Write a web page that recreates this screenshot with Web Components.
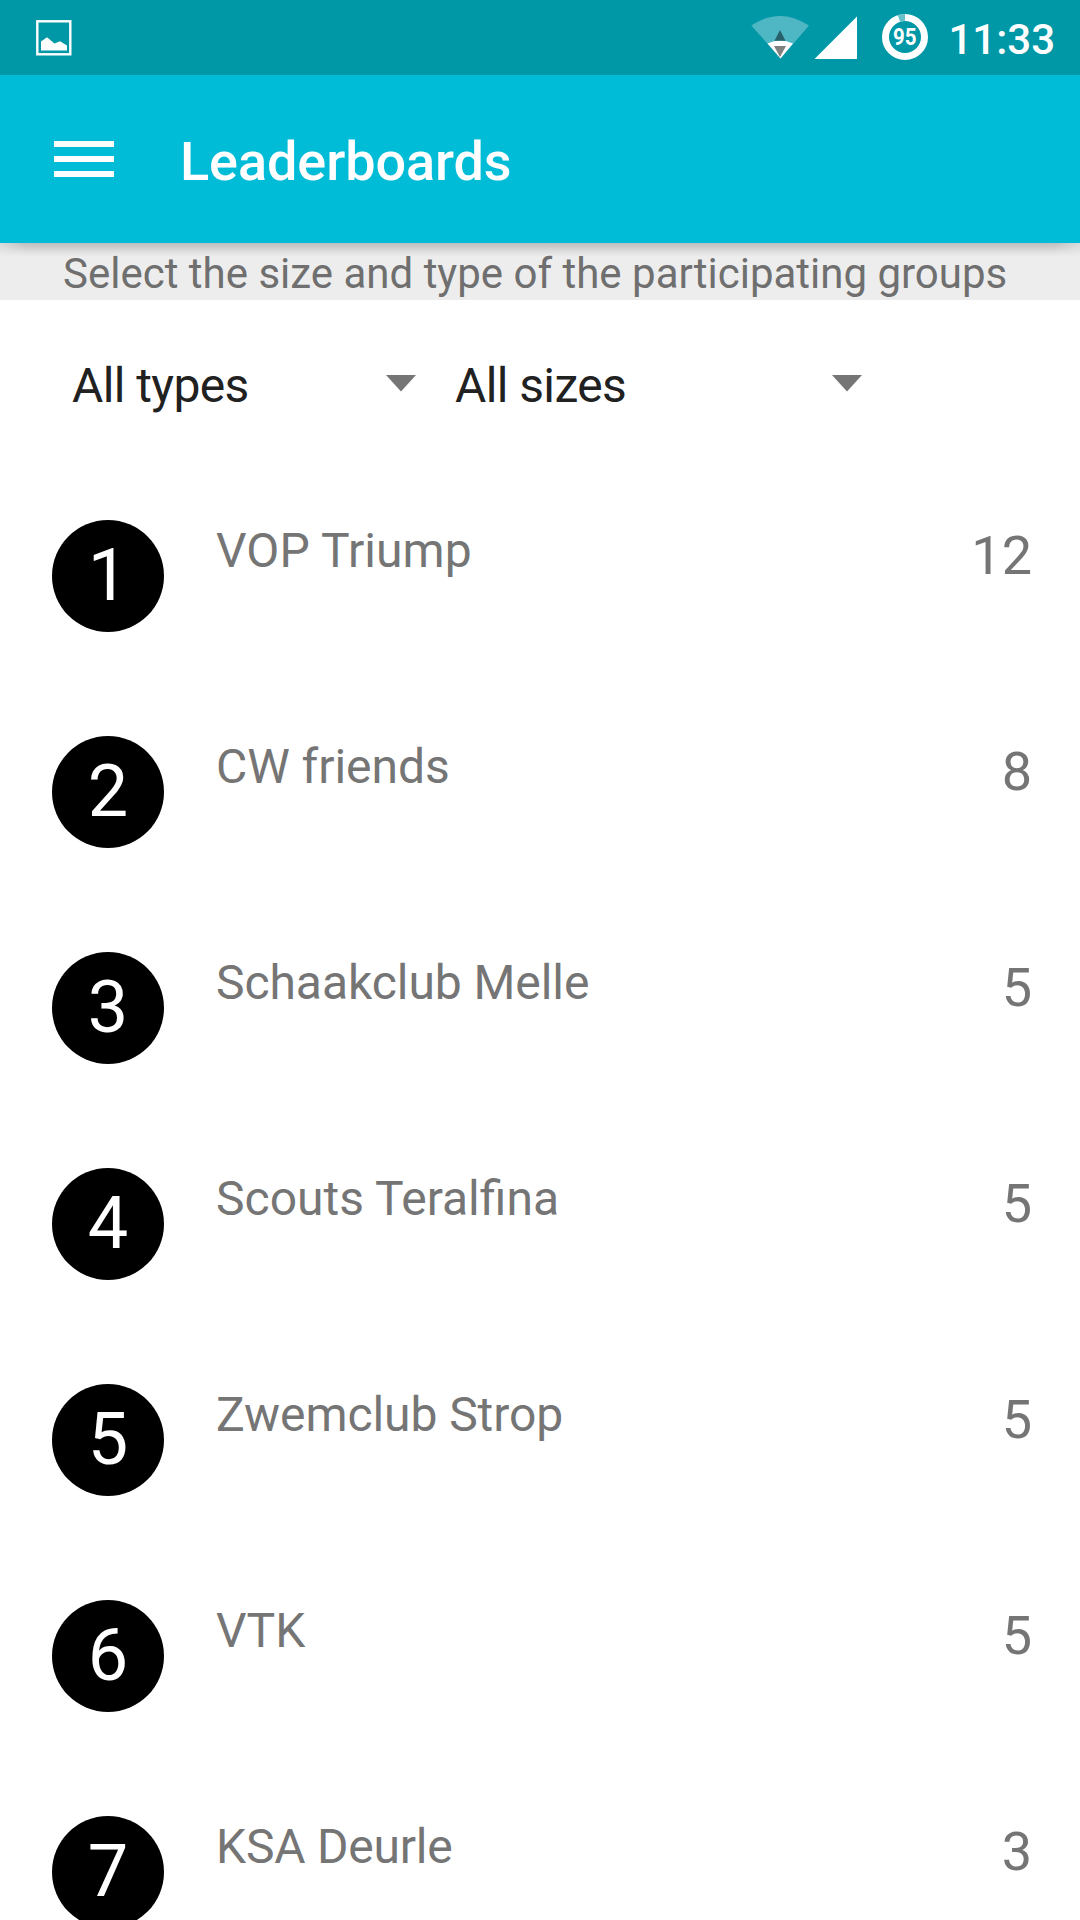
<!DOCTYPE html>
<html lang="en">
<head>
<meta charset="utf-8">
<title>Leaderboards</title>
<style>
html,body{margin:0;padding:0;width:1080px;height:1920px;overflow:hidden;background:#fff;font-family:Roboto,"Liberation Sans",sans-serif}
</style>
</head>
<body>
<leader-app></leader-app>
<script>
const define = (name, html) => customElements.define(name, class extends HTMLElement {
  constructor() {
    super();
    const t = document.createElement('template');
    t.innerHTML = html;
    this.attachShadow({mode: 'open'}).append(t.content.cloneNode(true));
  }
});

define('status-bar', `
<style>
:host{display:flex;height:75px;background:#0097a7;color:#fff;box-sizing:border-box;padding:0 25px 0 36px;justify-content:space-between}
svg{display:block}
.right{display:flex}
.time{font-size:42px;font-weight:500;line-height:79px;margin-left:19px}
</style>
<svg width="36" height="75" viewBox="0 0 36 75"><rect x="1.3" y="21.3" width="33" height="33" fill="none" stroke="#fff" stroke-width="2.4"/><path d="M5 50.5V41.5L11 37.2L18.5 43.5L24 41.2L31 45.5V50.5Z" fill="#fff"/></svg>
<div class="right">
<svg width="178" height="75" viewBox="751 0 178 75">
<path d="M751.3 25.5Q780 6.5 809 25.5L780.5 58.5Z" fill="#4fb6c3"/>
<path d="M767.5 43.5Q780 37.5 793 43.5L780.5 58.5Z" fill="#fff"/>
<path d="M774.5 40.7L780 30L785.5 40.7Z" fill="#26616b"/>
<path d="M774 46H786L780 57Z" fill="#808080"/>
<path d="M814.5 59L857 16.5V59Z" fill="#fff"/>
<circle cx="905" cy="37" r="19.5" fill="none" stroke="#fff" stroke-width="7"/>
<path d="M898.9 18.5A19.5 19.5 0 0 1 905 17.5" fill="none" stroke="#66c1ca" stroke-width="7"/>
<text x="904.7" y="45" text-anchor="middle" textLength="23.5" lengthAdjust="spacingAndGlyphs" font-size="23" font-weight="700" fill="#fff">95</text>
</svg>
<span class="time">11:33</span>
</div>`);

define('app-bar', `
<style>
:host{display:flex;align-items:center;height:168px;box-sizing:border-box;padding-left:54px;background:#00bcd7;color:#fff;position:relative;z-index:1}
:host::after{content:"";position:absolute;left:0;right:0;top:168px;height:14px;background:linear-gradient(rgba(0,0,0,.2),rgba(0,0,0,.12) 35%,rgba(0,0,0,.03) 75%,transparent);-webkit-mask:linear-gradient(90deg,rgba(0,0,0,.4),#000 26px,#000 1054px,rgba(0,0,0,.4))}
.menu{display:flex;flex-direction:column;gap:9px;width:60px}
i{display:block;height:6px;background:#fff}
.title{font-size:54px;font-weight:500;line-height:64px;letter-spacing:-.08px;margin-left:66px;padding-top:5px}
</style>
<div class="menu"><i></i><i></i><i></i></div>
<div class="title"><slot></slot></div>`);

define('hint-strip', `
<style>:host{display:block;height:57px;box-sizing:border-box;padding:3px 0 0 63px;background:#ededed;color:#6f6f6f;font-size:42px;line-height:56px;white-space:nowrap}</style>
<slot></slot>`);

define('drop-select', `
<style>
:host{display:flex;box-sizing:border-box;justify-content:space-between;font-size:48px;line-height:56px;letter-spacing:-.6px;color:#212121}
svg{display:block;margin-top:17px}
</style>
<slot></slot><svg width="30" height="17" viewBox="0 0 30 17"><path d="M0 0H30L15 16.5Z" fill="#757575"/></svg>`);

define('filter-row', `
<style>:host{display:flex;height:220px;box-sizing:border-box;padding:58px 0 0 72px;gap:39px}
::slotted(:first-child){width:344px}::slotted(:last-child){width:407px}</style>
<slot></slot>`);

define('rank-row', `
<style>
:host{display:flex;height:216px;box-sizing:border-box;padding:0 48px 0 52px;color:#757575}
.rank{width:112px;height:112px;border-radius:50%;background:#000;color:#fff;font-size:72px;line-height:112px;text-align:center}
.name{flex:1;margin-left:52px;padding-top:3px;font-size:48px;line-height:56px;letter-spacing:var(--tracking,0)}
.points{padding-top:4px;font-size:54px;line-height:64px}
</style>
<div class="rank"><slot name="rank"></slot></div>
<div class="name"><slot></slot></div>
<div class="points"><slot name="points"></slot></div>`);

const rows = [['VOP Triump',12,.1],['CW friends',8,-.05],['Schaakclub Melle',5,-.07],['Scouts Teralfina',5,0],['Zwemclub Strop',5,-.08],['VTK',5,0],['KSA Deurle',3,-.22]];
define('leader-app', `
<style>:host{display:block;width:1080px;height:1920px;overflow:hidden}</style>
<status-bar></status-bar>
<app-bar>Leaderboards</app-bar>
<hint-strip>Select the size and type of the participating groups</hint-strip>
<filter-row><drop-select>All types</drop-select><drop-select>All sizes</drop-select></filter-row>
${rows.map(([n,p,t],i)=>`<rank-row${t?` style="--tracking:${t}px"`:''}><span slot="rank">${i+1}</span>${n}<span slot="points">${p}</span></rank-row>`).join('')}`);
</script>
</body>
</html>
